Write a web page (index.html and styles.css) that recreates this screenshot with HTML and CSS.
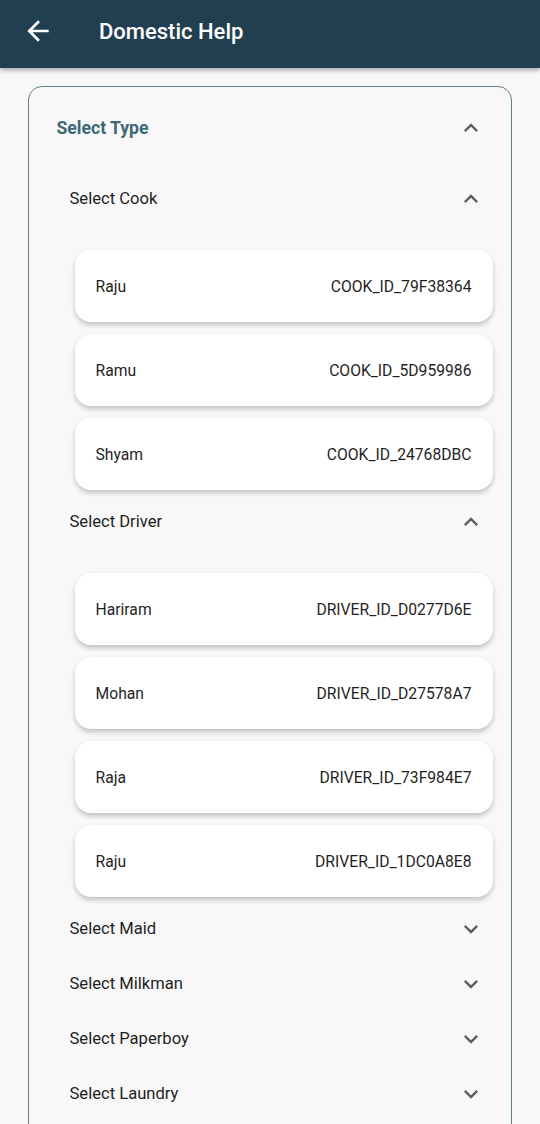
FILE: index.html
```html
<!DOCTYPE html>
<html lang="en">
<head>
<meta charset="utf-8">
<title>Domestic Help</title>
<link rel="stylesheet" href="styles.css">
</head>
<body>
<header class="appbar">
  <svg class="back" viewBox="0 0 24 24" width="32" height="32"><path d="M20 11H7.83l5.59-5.59L12 4l-8 8 8 8 1.41-1.41L7.83 13H20v-2z" fill="#fff"/></svg>
  <h1 class="title">Domestic Help</h1>
</header>
<main class="content">
  <section class="panel">
    <div class="type-row">
      <span class="type-label">Select Type</span>
      <svg class="chev" viewBox="0 0 24 24" width="28" height="28"><path d="M12 8l-6 6 1.41 1.41L12 10.83l4.59 4.58L18 14z"/></svg>
    </div>

    <div class="sub-row">
      <span class="sub-label">Select Cook</span>
      <svg class="chev" viewBox="0 0 24 24" width="28" height="28"><path d="M12 8l-6 6 1.41 1.41L12 10.83l4.59 4.58L18 14z"/></svg>
    </div>
    <div class="list">
      <div class="item"><span>Raju</span><span>COOK_ID_79F38364</span></div>
      <div class="item"><span>Ramu</span><span>COOK_ID_5D959986</span></div>
      <div class="item"><span>Shyam</span><span>COOK_ID_24768DBC</span></div>
    </div>

    <div class="sub-row">
      <span class="sub-label">Select Driver</span>
      <svg class="chev" viewBox="0 0 24 24" width="28" height="28"><path d="M12 8l-6 6 1.41 1.41L12 10.83l4.59 4.58L18 14z"/></svg>
    </div>
    <div class="list">
      <div class="item"><span>Hariram</span><span>DRIVER_ID_D0277D6E</span></div>
      <div class="item"><span>Mohan</span><span>DRIVER_ID_D27578A7</span></div>
      <div class="item"><span>Raja</span><span>DRIVER_ID_73F984E7</span></div>
      <div class="item"><span>Raju</span><span>DRIVER_ID_1DC0A8E8</span></div>
    </div>

    <div class="sub-row">
      <span class="sub-label">Select Maid</span>
      <svg class="chev" viewBox="0 0 24 24" width="28" height="28"><path d="M16.59 8.59L12 13.17 7.41 8.59 6 10l6 6 6-6z"/></svg>
    </div>
    <div class="sub-row">
      <span class="sub-label">Select Milkman</span>
      <svg class="chev" viewBox="0 0 24 24" width="28" height="28"><path d="M16.59 8.59L12 13.17 7.41 8.59 6 10l6 6 6-6z"/></svg>
    </div>
    <div class="sub-row">
      <span class="sub-label">Select Paperboy</span>
      <svg class="chev" viewBox="0 0 24 24" width="28" height="28"><path d="M16.59 8.59L12 13.17 7.41 8.59 6 10l6 6 6-6z"/></svg>
    </div>
    <div class="sub-row">
      <span class="sub-label">Select Laundry</span>
      <svg class="chev" viewBox="0 0 24 24" width="28" height="28"><path d="M16.59 8.59L12 13.17 7.41 8.59 6 10l6 6 6-6z"/></svg>
    </div>
  </section>
</main>
</body>
</html>
```

FILE: styles.css
```css
* { box-sizing: border-box; }

body {
  margin: 0;
  background: #f8f8f8;
  font-family: Roboto, "Noto Sans", sans-serif;
  color: #1f1f1f;
}

.appbar {
  height: 68px;
  background: #213f51;
  display: flex;
  align-items: center;
  padding-left: 22px;
  box-shadow: 0 2px 5px rgba(0, 0, 0, 0.35);
  position: relative;
  z-index: 1;
}

.back {
  display: block;
  margin-top: -6px;
}

.title {
  margin: 0 0 0 45px;
  margin-top: -6px;
  font-size: 22px;
  font-weight: 500;
  color: #fff;
}

.content {
  padding: 18px 28px 0;
}

.panel {
  border: 1.5px solid #5f7f8b;
  border-radius: 14px;
  padding-top: 13px;
  padding-bottom: 20px;
}

.type-row {
  height: 56px;
  display: flex;
  align-items: center;
  justify-content: space-between;
  padding: 0 26.5px 0 27.5px;
  margin-bottom: 15px;
}

.type-label {
  font-size: 17.6px;
  font-weight: 700;
  color: #3d6877;
}

.chev {
  display: block;
  fill: #5f5f5f;
}

.sub-row {
  height: 55px;
  display: flex;
  align-items: center;
  justify-content: space-between;
  padding: 0 26.5px 0 40.5px;
}

.sub-label {
  font-size: 16.6px;
  color: #1f1f1f;
}

.list {
  display: flex;
  flex-direction: column;
  gap: 12px;
  padding: 24px 18.5px 4px 45.5px;
}

.item {
  height: 72px;
  background: #fff;
  border-radius: 16px;
  box-shadow: 0 3px 5px rgba(0, 0, 0, 0.22);
  display: flex;
  align-items: center;
  justify-content: space-between;
  padding: 0 21px;
  font-size: 15.7px;
  color: #1f1f1f;
}
```
